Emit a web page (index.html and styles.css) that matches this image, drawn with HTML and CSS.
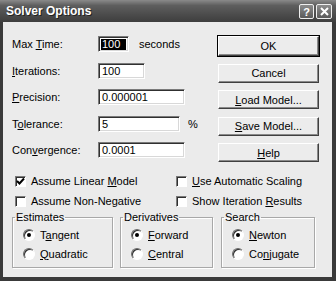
FILE: index.html
```html
<!DOCTYPE html>
<html lang="en">
<head>
  <meta charset="UTF-8" />
  <title>Solver Options</title>
  <link rel="stylesheet" href="styles.css">
</head>
<body>
  <div class="window">
    <div class="titlebar">
      <span class="title">Solver Options</span>
      <div class="caption-btns">
        <span class="cap-btn">?</span>
        <span class="cap-btn close">
          <svg width="9" height="9" viewBox="0 0 9 9"><path d="M1 1L8 8M8 1L1 8" stroke="#fff" stroke-width="2"/></svg>
        </span>
      </div>
    </div>

    <div class="content">
      <div class="top">
        <div class="fields">
          <div class="row">
            <label>Max <u>T</u>ime:</label>
            <span class="input small selected"><span class="sel">100</span></span>
            <span class="unit">seconds</span>
          </div>
          <div class="row">
            <label><u>I</u>terations:</label>
            <span class="input mid">100</span>
          </div>
          <div class="row">
            <label><u>P</u>recision:</label>
            <span class="input wide">0.000001</span>
          </div>
          <div class="row">
            <label>T<u>o</u>lerance:</label>
            <span class="input tol">5</span>
            <span class="unit pct">%</span>
          </div>
          <div class="row">
            <label>Con<u>v</u>ergence:</label>
            <span class="input wide">0.0001</span>
          </div>
        </div>
        <div class="buttons">
          <button class="default">OK</button>
          <button>Cancel</button>
          <button><u>L</u>oad Model...</button>
          <button><u>S</u>ave Model...</button>
          <button><u>H</u>elp</button>
        </div>
      </div>

      <div class="checks">
        <div class="check"><span class="box"><svg width="9" height="9" viewBox="0 0 9 9"><path d="M1 4L3.5 6.5L8 1.5" stroke="#000" stroke-width="2" fill="none"/></svg></span><span>Assume Linear <u>M</u>odel</span></div>
        <div class="check"><span class="box"></span><span><u>U</u>se Automatic Scaling</span></div>
        <div class="check"><span class="box"></span><span>Assume Non-Negative</span></div>
        <div class="check"><span class="box"></span><span>Show Iteration <u>R</u>esults</span></div>
      </div>

      <div class="groups">
        <fieldset class="group est">
          <legend>Estimates</legend>
          <div class="radio"><span class="dot on"></span><span>T<u>a</u>ngent</span></div>
          <div class="radio"><span class="dot"></span><span><u>Q</u>uadratic</span></div>
        </fieldset>
        <fieldset class="group der">
          <legend>Derivatives</legend>
          <div class="radio"><span class="dot on"></span><span><u>F</u>orward</span></div>
          <div class="radio"><span class="dot"></span><span><u>C</u>entral</span></div>
        </fieldset>
        <fieldset class="group srch">
          <legend>Search</legend>
          <div class="radio"><span class="dot on"></span><span><u>N</u>ewton</span></div>
          <div class="radio"><span class="dot"></span><span>Co<u>n</u>jugate</span></div>
        </fieldset>
      </div>
    </div>
  </div>
</body>
</html>
```

FILE: styles.css
```css
body {
  margin: 0;
  padding: 0;
  background: #fff;
  font-family: "Liberation Sans", Arial, sans-serif;
  font-size: 11px;
  color: #000;
}
.window {
  width: 336px;
  height: 281px;
  box-sizing: border-box;
  background: #3a3a3a;
  padding: 0 4px 4px 3px;
  display: flex;
  flex-direction: column;
}
.titlebar {
  height: 22px;
  margin: 0 -4px 0 -3px;
  background: linear-gradient(#8a8a8a 0%, #5e5e5e 25%, #4a4a4a 70%, #3e3e3e 100%);
  display: flex;
  align-items: center;
  justify-content: space-between;
  padding: 0 4px 0 6px;
}
.title {
  color: #fff;
  font-weight: bold;
  font-size: 12px;
  text-shadow: 1px 1px 0 #222;
}
.caption-btns {
  display: flex;
  gap: 2px;
  margin-top: 1px;
}
.cap-btn {
  width: 13px;
  height: 13px;
  border: 1px solid #eee;
  border-radius: 2px;
  background: linear-gradient(#8c8c8c, #5a5a5a);
  color: #fff;
  font-weight: bold;
  font-size: 11px;
  display: flex;
  align-items: center;
  justify-content: center;
}
.cap-btn.close {
  width: 14px;
}
.content {
  flex: 1;
  background: #ebebeb;
  padding: 14px 0 0 9px;
}
.top {
  display: flex;
}
.fields {
  width: 206px;
  display: flex;
  flex-direction: column;
  gap: 10.5px;
}
.row {
  display: flex;
  align-items: center;
  height: 16px;
}
.row label {
  width: 86px;
  flex: none;
}
.input {
  height: 16px;
  box-sizing: border-box;
  background: #fff;
  border: 1px solid;
  border-color: #7a7a7a #fff #fff #7a7a7a;
  box-shadow: inset 1px 1px 0 #303030, inset -1px -1px 0 #d8d8d8;
  padding: 1px 3px 0 3px;
  line-height: 13px;
}
.input.small { width: 31px; }
.input.mid { width: 47px; }
.input.wide { width: 87px; }
.input.tol { width: 82px; }
.input.selected {
  padding: 2px 2px 1px 2px;
  line-height: 11px;
}
.sel {
  display: block;
  background: #000;
  color: #fff;
  height: 11px;
  padding-left: 1px;
}
.unit {
  margin-left: 10px;
}
.unit.pct {
  margin-left: 8px;
}
.buttons {
  display: flex;
  flex-direction: column;
  gap: 7.5px;
  width: 101px;
}
.buttons button {
  height: 19px;
  padding: 0;
  font-family: inherit;
  font-size: 11px;
  background: #ececec;
  border: 1px solid;
  border-color: #fff #404040 #404040 #fff;
  box-shadow: inset -1px -1px 0 #8a8a8a;
  color: #000;
}
.buttons button.default {
  height: 20px;
  outline: 1px solid #000;
  outline-offset: 0;
}
.checks {
  display: grid;
  grid-template-columns: 161px 140px;
  grid-auto-rows: 20px;
  margin-top: 9px;
  padding-left: 3px;
}
.check {
  display: flex;
  align-items: center;
}
.box {
  width: 11px;
  height: 11px;
  box-sizing: border-box;
  background: #fff;
  border: 1px solid;
  border-color: #7a7a7a #fff #fff #7a7a7a;
  box-shadow: inset 1px 1px 0 #303030;
  margin-right: 5px;
  display: flex;
  align-items: center;
  justify-content: center;
}
.groups {
  display: flex;
  gap: 8px;
  margin-top: 0;
}
.group {
  margin: 0;
  padding: 2px 0 4px 10px;
  border: 1px solid #a8a8a8;
  box-shadow: 1px 1px 0 #fff, inset 1px 1px 0 #fff;
  box-sizing: border-box;
}
.group legend {
  padding: 0 1px;
  margin-left: -8px;
  line-height: 12px;
}
.est { width: 101px; }
.der { width: 93px; margin-left: -1px; }
.srch { width: 94px; }
.radio {
  display: flex;
  align-items: center;
  height: 19px;
}
.dot {
  width: 12px;
  height: 12px;
  box-sizing: border-box;
  border-radius: 50%;
  background: #fff;
  border: 1px solid;
  border-color: #6a6a6a #fff #fff #6a6a6a;
  box-shadow: inset 1px 1px 0 #303030;
  margin-right: 5px;
  position: relative;
}
.dot.on::after {
  content: "";
  position: absolute;
  left: 3px;
  top: 3px;
  width: 4px;
  height: 4px;
  border-radius: 50%;
  background: #000;
}
```
